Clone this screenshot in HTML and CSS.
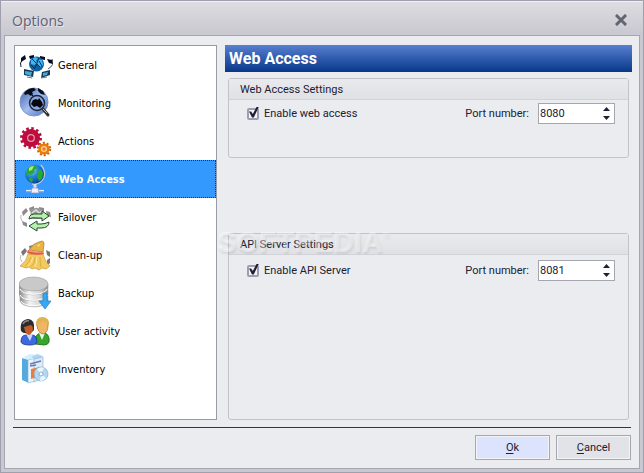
FILE: index.html
```
<!DOCTYPE html>
<html lang="en">
<head>
    <meta charset="UTF-8">
    <meta name="viewport" content="width=device-width, initial-scale=1.0">
    <title>Options</title>
    <link rel="stylesheet" href="styles.css">
</head>

<body>
    <main class="window">
        <header class="title-bar">
            <h1 class="window-title">Options</h1>
            <button type="button" class="button-close" aria-label="Close">
                <svg width="12" height="12" viewBox="0 0 12 12"><path d="M2 2L10 10M10 2L2 10" stroke="#62646f" stroke-width="3" stroke-linecap="square"/></svg>
            </button>
        </header>

        <form class="panel">
            <div class="content">
                <nav class="sidebar">
                    <button type="button" class="nav-item">
                        <svg class="nav-icon" viewBox="0 0 34 34">
                            <g fill="none" stroke="#10182c" stroke-width="1">
                                <path d="M4 11Q0 15 2 19"/>
                                <path d="M33 11Q36 17 29 21" stroke="#555"/>
                            </g>
                            <path d="M2 10l4-3 1 4-5 3zM10 8l5-1v3l-4 1zM21 8l5 1v3l-5-1zM28 11l5 1 1 4-4-1z" fill="#060b22"/>
                            <circle cx="17.5" cy="16" r="7.500" fill="#0d62a0"/>
                            <path d="M12 12l4-3 3 1-2 3 2 2-4 2-3-1zM19 11l4 1 1 5-3 2-3-3z" fill="#43b5ec"/>
                            <path d="M13 11l8 8M16 20l4-10M20 13l3 5M12 17l4 4" stroke="#082d61" stroke-width="1"/>
                            <path d="M5 21l10 2-1 6-9-2zM23 24l8-2v5l-9 3z" fill="#123c5c"/>
                            <path d="M6 23l7 1-1 4-6-2zM24 25l5-1-1 3-4 1z" fill="#4aa9d4"/>
                            <path d="M8 29l5 1M22 30l6-1" stroke="#777"/>
                        </svg>
                        <span>General</span>
                    </button>
                    <button type="button" class="nav-item">
                        <svg class="nav-icon" viewBox="0 0 34 34">
                            <defs>
                                <linearGradient id="sphere" x1="0" y1="0" x2="1" y2="1">
                                    <stop offset="0" stop-color="#3b5ea6"/>
                                    <stop offset=".5" stop-color="#a3bdf0"/>
                                    <stop offset="1" stop-color="#466fc0"/>
                                </linearGradient>
                            </defs>
                            <circle cx="15" cy="16" r="14" fill="url(#sphere)" stroke="#7f96c8" stroke-width="1"/>
                            <path d="M5 7Q9 2 15 2L17 4 13 6 14 8 12 10 9 8 6 9zM19 2l5 3 2 4-4-1-3-3z" fill="#080c18"/>
                            <path d="M12 8l3 3" stroke="#080c18" stroke-width="1"/>
                            <circle cx="18" cy="17" r="7.500" fill="#86a6e4" stroke="#20242f" stroke-width="1.500"/>
                            <path d="M12 18l2-4 3-1 2 1 1-2 3 4 1 3-3 3-3-2-3 1z" fill="#07090f"/>
                            <path d="M24 23l5 6" stroke="#333" stroke-width="3" stroke-linecap="round"/>
                            <path d="M24 23l4 4" stroke="#bbb" stroke-width="1"/>
                        </svg>
                        <span>Monitoring</span>
                    </button>
                    <button type="button" class="nav-item">
                        <svg class="nav-icon" viewBox="0 0 34 34">
                            <circle cx="12" cy="14" r="9.5" fill="none" stroke="#b80c3c" stroke-width="3" stroke-dasharray="2.5 2.47"/>
                            <circle cx="12" cy="14" r="9" fill="#bd0d3e"/>
                            <circle cx="12" cy="14" r="3.3" fill="#b80c3c" stroke="#f09ab1" stroke-width="1.2"/>
                            <circle cx="25" cy="25" r="6" fill="none" stroke="#c96505" stroke-width="2.4" stroke-dasharray="2 1.77"/>
                            <circle cx="25" cy="25" r="5.6" fill="#e97c0c"/>
                            <circle cx="25" cy="25" r="2.4" fill="#e97c0c" stroke="#ffd096" stroke-width="1.3"/>
                        </svg>
                        <span>Actions</span>
                    </button>
                    <button type="button" class="nav-item selected" aria-current="page">
                        <svg class="nav-icon" viewBox="0 0 34 34">
                            <defs>
                                <radialGradient id="earth" cx=".35" cy=".3" r=".75">
                                    <stop offset="0" stop-color="#9be4ff"/>
                                    <stop offset=".45" stop-color="#2087dc"/>
                                    <stop offset="1" stop-color="#063f93"/>
                                </radialGradient>
                            </defs>
                            <path d="M22 3Q28 10 24 17 20 23 13 22" fill="none" stroke="#bccbd0" stroke-width="1.4"/>
                            <path d="M16 22v5" stroke="#d9dfed" stroke-width="3"/>
                            <circle cx="15.500" cy="12" r="9.500" fill="url(#earth)"/>
                            <path d="M8 7Q11 3 17 3L18 6 15 8 16 10 12 13 9 12 7 14zM19 9l3-2 2 4-1 6-3 2-2-4zM10 15l4 2-1 4-3-3z" fill="#2aa734"/>
                            <path d="M10 6q2-2 5-2l-2 4-3 1z" fill="#b3e880"/>
                            <path d="M7 29h18" stroke="#9fa7c4" stroke-width="2.5"/>
                            <path d="M7 28.500h18" stroke="#e6e9f6" stroke-width="1"/>
                            <path d="M13 26h6l1 5h-8z" fill="#f0f0fb" stroke="#8b91b8" stroke-width=".7"/>
                        </svg>
                        <span>Web Access</span>
                    </button>
                    <button type="button" class="nav-item">
                        <svg class="nav-icon" viewBox="0 0 34 34">
                            <path d="M3 12l4-4 2 3-5 5zM10 8l5-2v4l-4 2zM20 7l5 1v4l-5-1zM27 11l4 1 1 5-4-1zM3 21l5 2v4l-4-2z" fill="#8c8c8c"/>
                            <path d="M12 10q6-5 12 1v8H11z" fill="#9a9a9a"/>
                            <path d="M13 13l4-3 3 3 3-2" fill="none" stroke="#ddd" stroke-width="1.500"/>
                            <path d="M2 15q-1 3 1 6" fill="none" stroke="#bbb"/>
                            <path d="M10 19q0-6 9-5h4v-3l7 5-7 5v-3h-5q-5-1-8 1z" fill="#b7efae" stroke="#244a2c" stroke-width="1"/>
                            <path d="M30 22q0 6-8 6h-4v3l-8-5 8-5v3h4q4 0 8-2z" fill="#b7efae" stroke="#244a2c" stroke-width="1"/>
                        </svg>
                        <span>Failover</span>
                    </button>
                    <button type="button" class="nav-item">
                        <svg class="nav-icon" viewBox="0 0 34 34">
                            <path d="M2 14l4-4 2 3-4 5zM10 8l4-1v4l-3 1zM27 12l4 2v5l-3-2zM28 22l3-2v5l-3 3z" fill="#777"/>
                            <path d="M2 17q-2 3 1 7" fill="none" stroke="#bbb"/>
                            <path d="M10 12Q14 5 20 4l3-1q2 0 2 3l-1 8z" fill="#e6b447" stroke="#a6792a" stroke-width=".7"/>
                            <path d="M18 7l3-1-1 3" fill="#f7df90"/>
                            <path d="M9 16Q8 23 1 28l6 2 3-1 3 2 3-1 4 2 3-2 4 1 4-3q-5-4-7-12z" fill="#f2ca5e" stroke="#bd8c27" stroke-width=".6"/>
                            <path d="M12 19q-2 6-6 9M16 19q0 7-4 10M21 19q0 6 1 10" fill="none" stroke="#d5a63a" stroke-width=".8"/>
                            <path d="M14 19q-1 6-5 9M18 19q0 6-2 10" fill="none" stroke="#ffeaa2" stroke-width="1"/>
                            <path d="M9 12q7 3 15 1l1 3q-9 2-17-1z" fill="#e2584b"/>
                            <path d="M10 13q7 2 14 1" fill="none" stroke="#f7a092" stroke-width="1"/>
                        </svg>
                        <span>Clean-up</span>
                    </button>
                    <button type="button" class="nav-item">
                        <svg class="nav-icon" viewBox="0 0 34 34">
                            <defs>
                                <linearGradient id="metal">
                                    <stop offset="0" stop-color="#888"/>
                                    <stop offset=".35" stop-color="#f4f4f4"/>
                                    <stop offset=".7" stop-color="#d5d5d5"/>
                                    <stop offset="1" stop-color="#858585"/>
                                </linearGradient>
                            </defs>
                            <g fill="url(#metal)" stroke="#9a9a9a" stroke-width=".6">
                                <path d="M1 20v4c0 9 28 9 28 0v-4z"/>
                                <path d="M0 14v4c0 9 29 9 29 0v-4z"/>
                                <path d="M0 8v4c0 9 29 9 29 0V8z"/>
                                <ellipse cx="14.500" cy="8" rx="14.500" ry="7" fill="#c9c9c9"/>
                            </g>
                            <path d="M1 13c2 7 25 7 27 0M1 19c2 7 25 7 27 0M2 25c2 6 23 6 25 0" fill="none" stroke="#fff" stroke-width="1"/>
                            <path d="M24 17h4v8h4l-6 8-6-8h4z" fill="#35a7f5" stroke="#1c82d0" stroke-width=".7"/>
                        </svg>
                        <span>Backup</span>
                    </button>
                    <button type="button" class="nav-item">
                        <svg class="nav-icon" viewBox="0 0 34 34">
                            <path d="M16 30q-1-9 5-11h5q5 2 4 9-1 3-5 3z" fill="#35a52b" stroke="#176a15" stroke-width=".8"/>
                            <path d="M20 19l3 7 3-7z" fill="#e9f7e3"/>
                            <path d="M18 12q0-8 6-8 6 0 5 7 0 8-5 9-5-1-6-8z" fill="#f0b566" stroke="#a9762b" stroke-width=".7"/>
                            <path d="M17 12q-1-9 7-9 7 1 6 9-2-4-6-5-3 3-7 5z" fill="#e1b252"/>
                            <path d="M2 28q0-7 5-7h7q4 1 4 7-1 3-7 3-8 0-9-3z" fill="#3e69df" stroke="#1c318e" stroke-width=".8"/>
                            <path d="M7 20l4 7 3-7z" fill="#c9d9ff"/>
                            <path d="M2 17Q0 6 9 5q7 0 6 11-2 3-5 3-6 1-8-2z" fill="#2c2c2f"/>
                            <path d="M5 13l7-2q2 1 2 4-1 5-4 6-4-1-5-8z" fill="#c65a24"/>
                            <path d="M4 10q2-4 6-3" fill="none" stroke="#888" stroke-width="1.500"/>
                        </svg>
                        <span>User activity</span>
                    </button>
                    <button type="button" class="nav-item">
                        <svg class="nav-icon" viewBox="0 0 34 34">
                            <path d="M3 6l7 2v23l-7-3z" fill="#55a9dc"/>
                            <path d="M3 6l8-4 6 1-7 5z" fill="#d4efff"/>
                            <path d="M9 8l8-2v23l-8 2z" fill="#e9f3fa" stroke="#83b7d9" stroke-width=".6"/>
                            <path d="M12 5l6-3 6 2-6 4z" fill="#a9d7f5"/>
                            <path d="M15 7l9-2v21l-9 4z" fill="#dcecf8" stroke="#7eadd0" stroke-width=".6"/>
                            <path d="M11 12l11-3M11 14l6-1" stroke="#6b7bb4" stroke-width="1.500"/>
                            <path d="M12 17l9-2v9l-9 3z" fill="#f17a35"/>
                            <circle cx="22" cy="22" r="7" fill="#b5d6f2" stroke="#7eacd2" stroke-width=".7"/>
                            <path d="M22 22l-4-5q4-3 7-1zM22 22l5 4q-2 3-6 3z" fill="#e9f8ff"/>
                            <circle cx="22" cy="22" r="2" fill="#fff" stroke="#6d9fc9" stroke-width=".8"/>
                        </svg>
                        <span>Inventory</span>
                    </button>
                </nav>

                <section class="page">
                    <h2 class="page-title">Web Access</h2>
                    <div class="groups">
                        <section class="group">
                            <h3 class="group-title">Web Access Settings</h3>
                            <div class="group-row">
                                <label class="check-label"><input type="checkbox" class="check" checked>Enable web access</label>
                                <label class="port-label" for="webPort">Port number:</label>
                                <div class="spinner">
                                    <input type="text" inputmode="numeric" id="webPort" class="spinner-input" value="8080">
                                    <div class="spinner-buttons">
                                        <button type="button" class="spin up" aria-label="Increase"></button>
                                        <button type="button" class="spin down" aria-label="Decrease"></button>
                                    </div>
                                </div>
                            </div>
                        </section>

                        <section class="group group-api">
                            <h3 class="group-title">API Server Settings</h3>
                            <div class="group-row">
                                <label class="check-label"><input type="checkbox" class="check" checked>Enable API Server</label>
                                <label class="port-label" for="apiPort">Port number:</label>
                                <div class="spinner">
                                    <input type="text" inputmode="numeric" id="apiPort" class="spinner-input" value="8081">
                                    <div class="spinner-buttons">
                                        <button type="button" class="spin up" aria-label="Increase"></button>
                                        <button type="button" class="spin down" aria-label="Decrease"></button>
                                    </div>
                                </div>
                            </div>
                        </section>
                    </div>
                </section>
            </div>

            <footer class="button-bar">
                <button type="submit" class="button button-ok"><span><u>O</u>k</span></button>
                <button type="button" class="button"><span><u>C</u>ancel</span></button>
            </footer>
        </form>

        <div class="watermark">SOFTPEDIA<sup>®</sup></div>
    </main>
</body>
</html>
```
FILE: styles.css
```
:root {
    --color-frame: #c9c8d1;
    --color-frame-border: #a09fad;
    --color-panel: #ebecef;
    --color-border: #a5a6b0;
    --color-group: #c2c3ca;
    --color-text: #202033;
    --color-accent: #0b3b8c;
    --color-selected: #3399ff;
}

* {
    margin: 0;
    padding: 0;
    box-sizing: border-box;
}

body {
    font-family: Roboto, sans-serif;
    font-size: 11px;
    color: var(--color-text);
}

button,
input {
    font: inherit;
    color: inherit;
}

.window {
    position: relative;
    display: flex;
    flex-direction: column;
    min-height: 100vh;
    padding: 0 3px 3px;
    border: 1px solid var(--color-frame-border);
    background-color: var(--color-frame);
}

/* Title bar */
.title-bar {
    display: flex;
    align-items: center;
    justify-content: space-between;
    height: 34px;
    margin: 0 -3px;
    padding: 3px 16px 0 11px;
    border-top: 1px solid #f2f2f5;
    background: linear-gradient(#dcdce1, #c9c8d0);
}

.window-title {
    font-family: "Open Sans", sans-serif;
    font-size: 14px;
    font-weight: 400;
    color: #5f6070;
    text-shadow: 1px 1px 0 #e6e6ec;
}

.button-close {
    display: flex;
    border: none;
    background: none;
}

/* Panel */
.panel {
    flex: 1;
    display: flex;
    flex-direction: column;
    padding: 9px 7px 8px 8px;
    border: 1px solid var(--color-border);
    background-color: var(--color-panel);
}

.content {
    flex: 1;
    display: flex;
    gap: 8px;
    padding-left: 1px;
}

.sidebar {
    width: 203px;
    border: 1px solid #989aa6;
    background-color: #fff;
}

.nav-item {
    display: flex;
    align-items: center;
    gap: 5px;
    width: 100%;
    height: 38px;
    padding-left: 3px;
    border: 1px solid transparent;
    background: none;
    font-family: "DejaVu Sans Condensed", "DejaVu Sans", sans-serif;
    font-size: 11px;
    text-align: left;
    color: #000;
}

.nav-item.selected {
    gap: 6px;
    border: 1px dotted #4b2a08;
    background-color: var(--color-selected);
    font-weight: 700;
    color: #fff;
}

.nav-icon {
    width: 34px;
    height: 34px;
}

/* Page */
.page {
    flex: 1;
    display: flex;
    flex-direction: column;
}

.page-title {
    height: 27px;
    padding-left: 4px;
    background: linear-gradient(#587fd0, #073789);
    font-size: 16px;
    font-weight: 700;
    line-height: 28px;
    color: #fff;
}

.groups {
    flex: 1;
    display: flex;
    flex-direction: column;
    gap: 75px;
    padding: 6px 3px 0;
}

.group {
    min-height: 80px;
    border: 1px solid var(--color-group);
    border-radius: 3px;
}

.group-api {
    flex: 1;
}

.group-title {
    height: 21px;
    padding-left: 11px;
    border-bottom: 1px solid #d2d3d8;
    background: linear-gradient(#e9eaed, #e0e1e4);
    font-size: 11px;
    font-weight: 400;
    line-height: 22px;
}

.group-row {
    display: flex;
    align-items: center;
    padding: 3px 13px 0 18px;
}

.group-api .group-row {
    padding-top: 5px;
}

.check-label {
    flex: 1;
    display: flex;
    align-items: center;
    gap: 5px;
}

.check {
    position: relative;
    width: 12px;
    height: 12px;
    border: 2px solid #9c9eb1;
    border-radius: 2px;
    background-color: #f4f4f7;
    appearance: none;
}

.check:checked::after {
    content: "";
    position: absolute;
    left: 0;
    top: -3px;
    width: 10px;
    height: 11px;
    background-color: #202033;
    clip-path: polygon(0 45%, 22% 45%, 38% 68%, 78% 0, 100% 0, 48% 100%, 30% 100%);
}

.port-label {
    margin-right: 9px;
}

.spinner {
    display: flex;
    width: 77px;
    height: 21px;
    border: 1px solid var(--color-border);
    background-color: #fff;
}

.spinner-input {
    flex: 1;
    width: 0;
    padding-left: 1px;
    border: none;
    outline: none;
    background: none;
}

.spinner-buttons {
    display: flex;
    flex-direction: column;
    justify-content: center;
    gap: 5px;
    padding-right: 4px;
}

.spin {
    width: 7px;
    height: 4px;
    border: none;
    background-color: var(--color-text);
}

.up {
    clip-path: polygon(50% 0, 100% 100%, 0 100%);
}

.down {
    clip-path: polygon(0 0, 100% 0, 50% 100%);
}

/* Bottom buttons */
.button-bar {
    display: flex;
    justify-content: flex-end;
    gap: 6px;
    margin: 7px 1px 0 0;
    padding-top: 7px;
    border-top: 1px solid var(--color-accent);
}

.button {
    width: 75px;
    height: 25px;
    border: 1px solid var(--color-border);
    box-shadow: inset 0 0 0 1px #f4f4f7;
    background-color: #e2e3e8;
}

.button-ok {
    background-color: #dbe3fd;
}

.button u {
    text-underline-offset: 2px;
}

.watermark {
    position: absolute;
    left: 216px;
    top: 223px;
    font-family: "Liberation Sans", sans-serif;
    font-size: 29px;
    font-weight: 700;
    line-height: 36px;
    color: rgba(255, 255, 255, 0.4);
    text-shadow: 1px 2px 2px rgba(0, 0, 0, 0.08);
    pointer-events: none;
}

.watermark sup {
    font-size: 9px;
    line-height: 9px;
    vertical-align: 14px;
}
```
